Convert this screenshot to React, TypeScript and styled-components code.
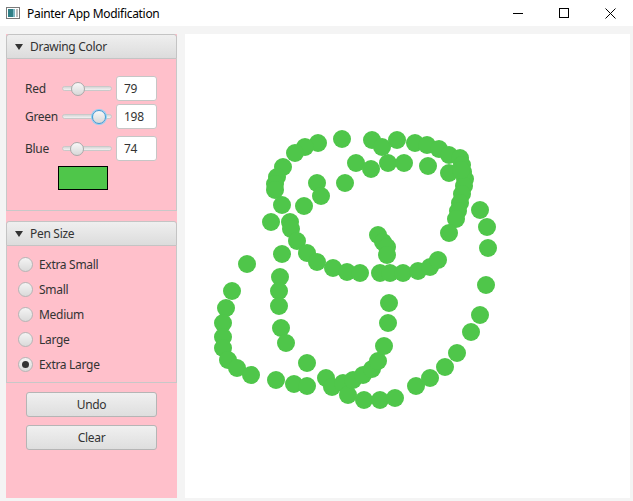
import React from "react";
import styled, { createGlobalStyle } from "styled-components";

const Global = createGlobalStyle`
  html, body { margin: 0; padding: 0; background: #f4f4f4; }
  body { font-family: "Noto Sans", "Open Sans", sans-serif; letter-spacing: -0.3px; }
  * { box-sizing: border-box; }
`;

const Window = styled.div`
  width: 633px;
  height: 501px;
  display: flex;
  flex-direction: column;
  background: #f4f4f4;
  overflow: hidden;
`;

const TitleBar = styled.div`
  height: 26px;
  background: #ffffff;
  display: flex;
  align-items: center;
  padding-left: 6px;
`;

const TitleText = styled.span`
  font-size: 12px;
  color: #000;
  margin-left: 7px;
  flex: 1;
`;

const WinButton = styled.div`
  width: 46px;
  height: 26px;
  display: flex;
  align-items: center;
  justify-content: center;
`;

const Body = styled.div`
  flex: 1;
  display: flex;
  gap: 8px;
  padding: 8px 3px 3px 6px;
`;

const SidePanel = styled.div`
  width: 171px;
  background: #ffc0cb;
  display: flex;
  flex-direction: column;
`;

const PaneHeader = styled.div`
  height: 25px;
  display: flex;
  align-items: center;
  padding-left: 8px;
  gap: 7px;
  background: linear-gradient(to bottom, #efefef, #dcdcdc);
  border: 1px solid #c4c4c4;
  border-radius: 3px 3px 0 0;
  font-size: 12px;
  color: #333;
`;

const Arrow = styled.span`
  width: 0;
  height: 0;
  border-left: 4px solid transparent;
  border-right: 4px solid transparent;
  border-top: 6px solid #333;
`;

const PaneContent = styled.div<{ $h: number }>`
  height: ${(p) => p.$h}px;
  border: 1px solid #c8c8c8;
  border-top: none;
  display: flex;
  flex-direction: column;
`;

const ColorRow = styled.div<{ $mt: number }>`
  display: flex;
  align-items: center;
  margin-top: ${(p) => p.$mt}px;
  height: 25px;
  padding-left: 18px;
`;

const RowLabel = styled.span`
  width: 37px;
  font-size: 12px;
  color: #333;
`;

const SliderTrack = styled.div`
  position: relative;
  width: 50px;
  height: 5px;
  border-radius: 3px;
  background: linear-gradient(to bottom, #d6d6d6, #f2f2f2);
  border: 1px solid #c9c9c9;
  margin-right: 4px;
`;

const Thumb = styled.div<{ $focus?: boolean }>`
  position: absolute;
  top: 50%;
  width: 14px;
  height: 14px;
  margin-left: -7px;
  margin-top: -7px;
  border-radius: 50%;
  background: linear-gradient(to bottom, #f8f8f8, #d8d8d8);
  border: 1px solid ${(p) => (p.$focus ? "#3a9bd8" : "#a9a9a9")};
  box-shadow: ${(p) => (p.$focus ? "0 0 0 1px #8fd0f5" : "none")};
`;

const NumField = styled.div`
  width: 41px;
  height: 25px;
  background: #fff;
  border: 1px solid #c6c6c6;
  border-radius: 3px;
  font-size: 12px;
  color: #333;
  display: flex;
  align-items: center;
  padding-left: 7px;
`;

const Swatch = styled.div<{ $c: string }>`
  width: 50px;
  height: 24px;
  margin: 5px 0 0 51px;
  background: ${(p) => p.$c};
  border: 1px solid #000;
`;

const Gap = styled.div`
  height: 10px;
`;

const RadioList = styled.div`
  display: flex;
  flex-direction: column;
  padding-top: 6px;
`;

const RadioRow = styled.div`
  height: 25px;
  display: flex;
  align-items: center;
  padding-left: 11px;
  gap: 6px;
  font-size: 12px;
  color: #333;
`;

const RadioDot = styled.div<{ $on?: boolean }>`
  width: 15px;
  height: 15px;
  border-radius: 50%;
  border: 1px solid #b5b5b5;
  background: linear-gradient(to bottom, #f4f4f4, #dadada);
  display: flex;
  align-items: center;
  justify-content: center;
  &::after {
    content: "";
    display: ${(p) => (p.$on ? "block" : "none")};
    width: 7px;
    height: 7px;
    border-radius: 50%;
    background: #333;
  }
`;

const ButtonArea = styled.div`
  display: flex;
  flex-direction: column;
  align-items: center;
  gap: 8px;
  padding-top: 9px;
`;

const Button = styled.div`
  width: 131px;
  height: 25px;
  border: 1px solid #b5b5b5;
  border-radius: 3px;
  background: linear-gradient(to bottom, #f0f0f0, #dedede);
  display: flex;
  align-items: center;
  justify-content: center;
  font-size: 12px;
  color: #333;
`;

const Canvas = styled.div`
  width: 445px;
  height: 464px;
  background: #fff;
`;

const DOTS: [number, number][] = [
  [342, 139], [318, 143], [305, 147], [295, 153], [283, 167], [277, 177], [275, 184], [275, 190],
  [282, 205], [271, 222], [290, 222], [291, 229], [297, 241], [307, 253], [317, 262], [333, 268],
  [347, 272], [360, 273], [380, 273], [390, 273], [403, 273], [418, 271], [430, 267], [438, 260],
  [304, 206], [317, 183], [321, 196], [345, 183], [356, 163], [371, 169], [388, 163], [404, 163], [428, 166],
  [372, 140], [382, 147], [397, 140], [415, 143], [427, 145], [439, 149], [449, 155], [460, 158],
  [462, 165], [463, 172], [465, 179], [464, 186], [462, 194], [460, 203], [458, 211], [456, 219],
  [449, 233], [449, 173], [461, 170],
  [480, 210], [487, 227], [488, 248],
  [378, 235], [383, 242], [387, 247], [387, 255],
  [282, 254], [247, 264],
  [280, 277], [279, 291], [279, 306], [281, 328], [286, 343],
  [232, 291], [226, 308], [223, 323], [223, 337], [223, 348], [228, 360], [237, 368], [251, 375],
  [276, 380], [294, 384], [307, 386], [307, 363],
  [326, 378], [332, 387], [343, 383], [348, 395], [353, 380], [364, 400], [380, 400], [395, 398],
  [363, 375], [372, 369], [378, 361], [384, 346], [388, 323], [389, 303],
  [416, 386], [430, 378], [445, 367], [457, 353], [471, 332], [480, 315], [486, 285],
];

const AppIcon = () => (
  <svg width="14" height="12" viewBox="0 0 14 12">
    <rect x="0.5" y="0.5" width="13" height="11" fill="#fff" stroke="#7a7a7a" />
    <rect x="2" y="2" width="5" height="8" fill="#2f7f86" />
    <rect x="7" y="2" width="2" height="8" fill="#7fb8c4" />
    <rect x="10" y="2" width="2" height="8" fill="#bcbcbc" />
  </svg>
);

const ColorSlider = ({ pos, focus }: { pos: number; focus?: boolean }) => (
  <SliderTrack>
    <Thumb $focus={focus} style={{ left: `${pos}px` }} />
  </SliderTrack>
);

export default function App() {
  const sizes = ["Extra Small", "Small", "Medium", "Large", "Extra Large"];
  return (
    <>
      <Global />
      <Window>
        <TitleBar>
          <AppIcon />
          <TitleText>Painter App Modification</TitleText>
          <WinButton>
            <svg width="10" height="10" viewBox="0 0 10 10">
              <line x1="0" y1="5.5" x2="10" y2="5.5" stroke="#000" strokeWidth="1" />
            </svg>
          </WinButton>
          <WinButton>
            <svg width="10" height="10" viewBox="0 0 10 10">
              <rect x="0.5" y="0.5" width="9" height="9" fill="none" stroke="#000" strokeWidth="1" />
            </svg>
          </WinButton>
          <WinButton>
            <svg width="11" height="11" viewBox="0 0 11 11">
              <path d="M0.5 0.5 L10.5 10.5 M10.5 0.5 L0.5 10.5" stroke="#000" strokeWidth="1" />
            </svg>
          </WinButton>
        </TitleBar>
        <Body>
          <SidePanel>
            <PaneHeader>
              <Arrow />
              Drawing Color
            </PaneHeader>
            <PaneContent $h={152}>
              <ColorRow $mt={17}>
                <RowLabel>Red</RowLabel>
                <ColorSlider pos={15} />
                <NumField>79</NumField>
              </ColorRow>
              <ColorRow $mt={3}>
                <RowLabel>Green</RowLabel>
                <ColorSlider pos={36} focus />
                <NumField>198</NumField>
              </ColorRow>
              <ColorRow $mt={7}>
                <RowLabel>Blue</RowLabel>
                <ColorSlider pos={14} />
                <NumField>74</NumField>
              </ColorRow>
              <Swatch $c="rgb(79,198,74)" />
            </PaneContent>
            <Gap />
            <PaneHeader>
              <Arrow />
              Pen Size
            </PaneHeader>
            <PaneContent $h={137}>
              <RadioList>
                {sizes.map((s) => (
                  <RadioRow key={s}>
                    <RadioDot $on={s === "Extra Large"} />
                    {s}
                  </RadioRow>
                ))}
              </RadioList>
            </PaneContent>
            <ButtonArea>
              <Button>Undo</Button>
              <Button>Clear</Button>
            </ButtonArea>
          </SidePanel>
          <Canvas>
            <svg width="445" height="464" viewBox="185 34 445 464">
              {DOTS.map(([x, y], i) => (
                <circle key={i} cx={x} cy={y} r={9} fill="#4fc64a" />
              ))}
            </svg>
          </Canvas>
        </Body>
      </Window>
    </>
  );
}
